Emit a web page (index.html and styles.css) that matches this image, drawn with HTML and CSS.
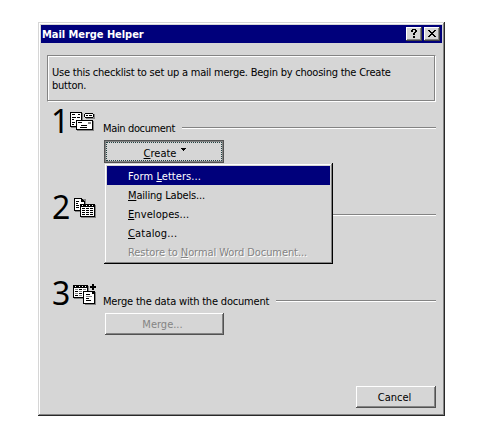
FILE: index.html
```html
<!DOCTYPE html>
<html lang="en">
<head>
<meta charset="utf-8">
<title>Mail Merge Helper</title>
<link rel="stylesheet" href="styles.css">
</head>
<body>
<main class="window">
  <header class="titlebar">
    <h1 class="title">Mail Merge Helper</h1>
    <button class="cap" aria-label="Help"><svg width="14" height="12" viewBox="0 0 14 12"><path d="M5 1h4v1H5zM4 2h2v2H4zM8 2h2v2H8zM7 4h2v1H7zM6 5h2v2H6zM6 8h2v2H6z"/></svg></button>
    <button class="cap" aria-label="Close"><svg width="14" height="12" viewBox="0 0 14 12"><path d="M3 2h2v1H3zM9 2h2v1H9zM4 3h2v1H4zM8 3h2v1H8zM5 4h4v1H5zM6 5h2v1H6zM5 6h4v1H5zM4 7h2v1H4zM8 7h2v1H8zM3 8h2v1H3zM9 8h2v1H9z"/></svg></button>
  </header>
  <div class="info"><p class="hint">Use this checklist to set up a mail merge. Begin by choosing the Create<br>button.</p></div>

  <section class="step">
    <div class="num one">1</div>
    <svg class="icon" width="32" height="32" viewBox="0 0 32 32">
      <path fill="#848484" d="M3 8h12v15H3zM18 9h9v5h-9zM9 16h17v10H9z"/>
      <path d="M2 7h12v15H2zM17 8h8v1h-8zM16 9h10v3H16zM17 12h8v1h-8z"/>
      <path fill="#fff" d="M3 8h10v13H3zM17 9h8v3h-8z"/>
      <path d="M4 9h3v1H4zM10 9h2v1h-2zM4 12h4v1H4zM9 12h3v1H9zM4 14h2v1H4zM4 17h3v1H4zM4 19h2v1H4zM18 10h2v1h-2zM21 10h3v1h-3zM8 15h17v10H8z"/>
      <path fill="#fff" d="M9 16h15v8H9z"/>
      <path d="M10 17h4v1h-4zM13 20h6v1h-6zM12 22h7v1h-7z"/>
      <path fill="#848484" d="M20 17h3v2h-3z"/>
    </svg>
    <div class="body">
      <div class="heading"><span class="h-main">Main document</span><i class="rule"></i></div>
      <div class="anchor">
        <button class="btn default"><span class="focus"><span class="t-create"><u>C</u>reate</span><svg class="arrow" width="5" height="3" viewBox="0 0 5 3"><path d="M0 0h5v1H0zM1 1h3v1H1zM2 2h1v1H2z"/></svg></span></button>
        <ul class="menu">
          <li class="item active"><span class="m1">Form <u>L</u>etters...</span></li>
          <li class="item"><span class="m2"><u>M</u>ailing Labels...</span></li>
          <li class="item"><span class="m3"><u>E</u>nvelopes...</span></li>
          <li class="item"><span class="m4"><u>C</u>atalog...</span></li>
          <li class="item disabled"><span class="m5">Restore to <u>N</u>ormal Word Document...</span></li>
        </ul>
      </div>
    </div>
  </section>

  <section class="step">
    <div class="num">2</div>
    <svg class="icon" width="32" height="32" viewBox="0 0 32 32">
      <path fill="#848484" d="M7 8h11v13H7zM13 14h15v13H13z"/>
      <path d="M6 7h8v1h1v1h1v1h1v10H6z"/>
      <path fill="#fff" d="M7 8h6v3h3v8H7z"/>
      <path d="M8 10h3v1H8zM8 12h2v1H8zM8 14h3v1H8zM8 16h3v1H8zM12 13h15v13H12z"/>
      <path fill="#fff" d="M13 16h13v9H13zM14 14h1v1h-1zM18 14h1v1h-1zM21 14h1v1h-1zM24 14h1v1h-1z"/>
      <path d="M14 17h3v1h-3zM18 17h3v1h-3zM22 17h3v1h-3zM14 19h3v1h-3zM18 19h3v1h-3zM22 19h3v1h-3zM14 21h3v1h-3zM18 21h3v1h-3zM22 21h3v1h-3zM14 23h3v1h-3zM18 23h3v1h-3zM22 23h3v1h-3z"/>
    </svg>
    <div class="body"><div class="heading"><i class="rule"></i></div></div>
  </section>

  <section class="step">
    <div class="num">3</div>
    <svg class="icon" width="32" height="32" viewBox="0 0 32 32">
      <path fill="#848484" d="M6 9h15v13H6zM17 15h11v13H17z"/>
      <path d="M5 8h15v13H5z"/>
      <path fill="#fff" d="M6 11h13v9H6zM7 9h1v1H7zM11 9h1v1h-1zM14 9h1v1h-1zM17 9h1v1h-1z"/>
      <path fill="#848484" d="M7 12h3v1H7zM15 12h3v1h-3zM11 14h3v1h-3zM7 16h3v1H7zM11 18h3v1h-3z"/>
      <path d="M11 12h3v1h-3zM7 14h3v1H7zM11 16h3v1h-3zM7 18h3v1H7zM15 14h12v13H15zM24 7h2v2h2v2h-2v2h-2v-2h-2V9h2z"/>
      <path fill="#fff" d="M16 15h8v2h2v9H16z"/>
      <path d="M18 17h4v1h-4zM18 21h3v1h-3zM18 23h5v1h-5z"/>
      <path fill="#848484" d="M18 19h6v1h-6z"/>
    </svg>
    <div class="body">
      <div class="heading"><span class="h-merge">Merge the data with the document</span><i class="rule"></i></div>
      <button class="btn merge" disabled><span>Merge...</span></button>
    </div>
  </section>

  <footer class="footer"><button class="btn cancel"><span>Cancel</span></button></footer>
</main>
</body>
</html>
```
FILE: styles.css
```css
* { box-sizing: border-box; }
body {
  margin: 0;
  padding: 22px 0 0 38px;
  background: #fff;
  color: #000;
  font: 11px/13px "DejaVu Sans Condensed", "DejaVu Sans", sans-serif;
}
button { font: inherit; color: inherit; padding: 0; border: 0; background: #d6d6d6; }
svg { display: block; shape-rendering: crispEdges; }
u { text-decoration: underline; text-underline-offset: 1px; text-decoration-thickness: 1px; text-decoration-skip-ink: none; }
.window {
  width: 407px;
  height: 394px;
  padding: 3px;
  background: #d6d6d6;
  box-shadow: inset -1px -1px #292929, inset 1px 1px #d6d6d6, inset -2px -2px #848484, inset 2px 2px #fff;
}
.titlebar { display: flex; align-items: center; height: 18px; background: #00007b; color: #fff; padding: 0 2px 0 1px; }
.title { margin: 0; flex: 1; font-size: 11px; font-weight: bold; line-height: 19px; letter-spacing: -.05px; white-space: nowrap; }
.cap {
  width: 16px;
  height: 14px;
  padding: 1px;
  box-shadow: inset -1px -1px #424242, inset 1px 1px #fff, inset -2px -2px #848484;
}
.cap + .cap { margin-left: 2px; }
.info {
  width: 389px;
  height: 47px;
  margin: 12px 0 0 6px;
  padding: 10px 4px;
  border: 1px solid #848484;
  border-right-color: #fff;
  border-bottom-color: #fff;
  box-shadow: inset -1px -1px #848484, inset 1px 1px #fff;
}
.hint { margin: 0; white-space: nowrap; letter-spacing: -.225px; }
.step { display: flex; height: 86px; padding-left: 10px; }
.info + .step { margin-top: 2px; }
.num { width: 17px; height: 34px; line-height: 34px; font-family: "Noto Sans", sans-serif; font-size: 32px; letter-spacing: -1px; text-indent: 1px; }
.one { text-indent: 0; }
.icon { margin-top: 1px; }
.body { width: 333px; padding-top: 18px; margin-left: 3px; }
.step + .step .body { padding-top: 19px; }
.heading { display: flex; align-items: center; height: 13px; width: 333px; white-space: nowrap; }
.h-main { letter-spacing: -.36px; }
.h-merge { letter-spacing: -.19px; }
.rule { flex: 1; height: 2px; border-top: 1px solid #848484; background: #fff; margin: 0 0 1px 7px; }
.anchor { position: relative; margin: 5px 0 0 1px; }
.btn {
  display: flex;
  align-items: center;
  justify-content: center;
  box-shadow: inset -1px -1px #525252, inset 1px 1px #fff, inset -2px -2px #848484;
}
.default { width: 120px; height: 23px; padding: 2px; box-shadow: inset 0 0 0 1px #525252, inset 0 0 0 2px #848484; }
.focus { display: flex; align-items: center; justify-content: center; gap: 5px; width: 116px; height: 19px; padding: 3px 0 0 2px; border: 1px dotted #214242; }
.arrow { margin-bottom: 7px; }
.menu {
  position: absolute;
  z-index: 1;
  left: 0;
  top: 23px;
  width: 229px;
  height: 101px;
  margin: 0;
  padding: 3px;
  list-style: none;
  background: #d6d6d6;
  box-shadow: inset -1px -1px #000, inset 1px 1px #d6d6d6, inset -2px -2px #848484, inset 2px 2px #fff;
}
.item { height: 19px; line-height: 21px; padding-left: 21px; white-space: nowrap; }
.m1 { letter-spacing: .07px; }
.m2 { letter-spacing: -.17px; }
.m3 { letter-spacing: .08px; }
.m4 { letter-spacing: .18px; }
.m5 { letter-spacing: -.08px; }
.active { background: #00007b; color: #fff; }
.disabled { color: #848484; text-shadow: 1px 1px #fff; }
.merge { width: 119px; height: 22px; margin: 5px 0 0 2px; padding-right: 4px; color: #848484; }
.footer { display: flex; justify-content: flex-end; padding: 24px 6px 0 0; }
.cancel { width: 80px; height: 22px; padding-right: 3px; }
```
